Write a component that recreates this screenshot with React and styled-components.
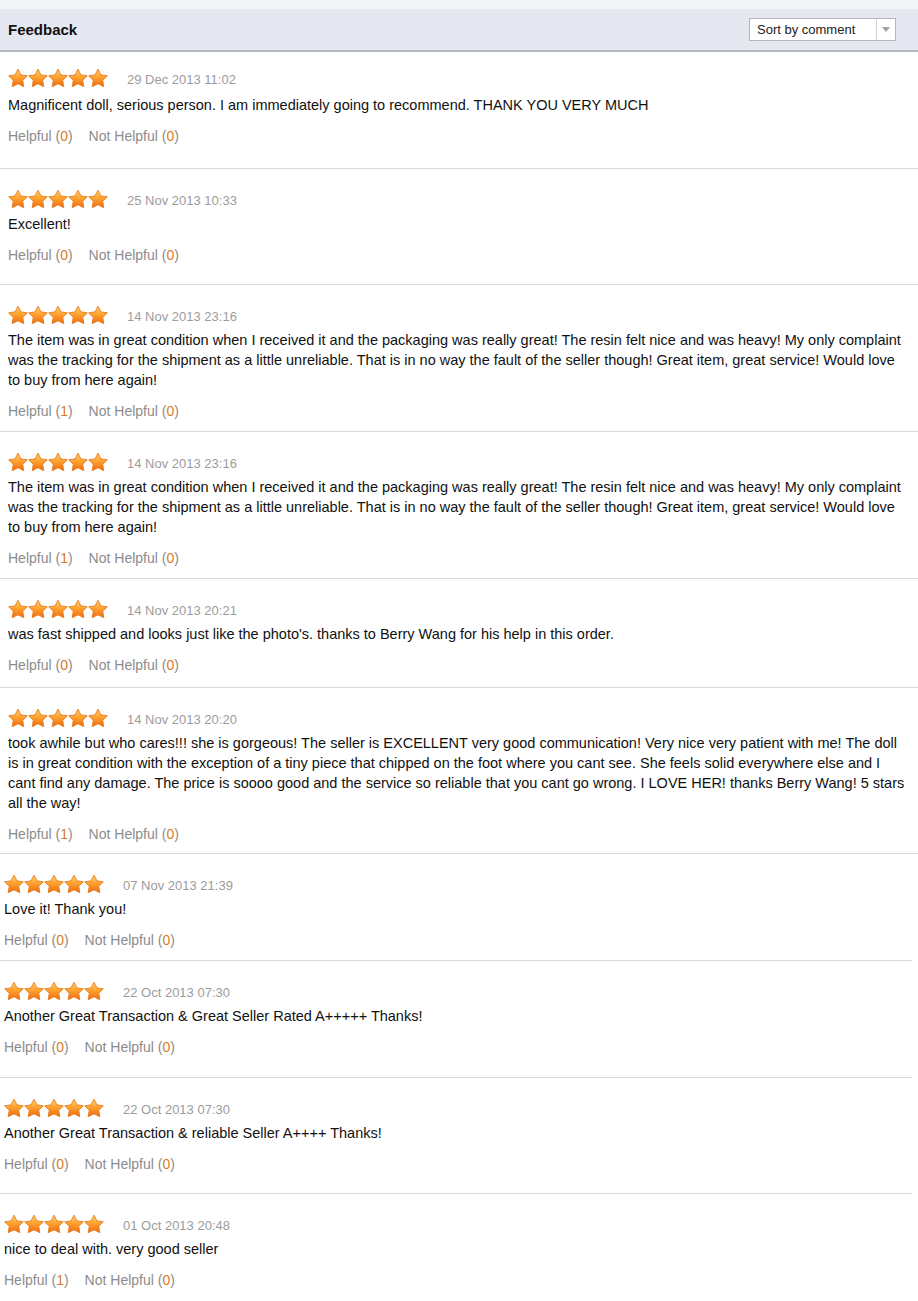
import React from "react";
import styled, { createGlobalStyle } from "styled-components";

const GlobalStyle = createGlobalStyle`
  html, body { margin: 0; padding: 0; background: #ffffff; }
  body { font-family: "Liberation Sans", Arial, sans-serif; color: #111; }
  * { box-sizing: border-box; }
`;

const Page = styled.div`
  width: 918px;
  background: #fff;
`;

const Header = styled.header`
  display: flex;
  align-items: center;
  justify-content: space-between;
  height: 52px;
  padding: 0 22px 0 8px;
  border-top: 9px solid #f3f4f7;
  border-bottom: 2px solid #b6b9c1;
  background: #e5e8f0;
`;

const Title = styled.h2`
  margin: 0;
  font-size: 15px;
  font-weight: bold;
  color: #111;
  line-height: 20px;
`;

const SortSelect = styled.div`
  display: flex;
  align-items: stretch;
  width: 147px;
  height: 23px;
  background: #fff;
  border: 1px solid #b7b7b7;
  cursor: pointer;
`;

const SortLabel = styled.span`
  flex: 1;
  padding-left: 7px;
  font-size: 13px;
  line-height: 21px;
  color: #222;
`;

const ArrowBox = styled.span`
  display: flex;
  align-items: center;
  justify-content: center;
  width: 19px;
  border-left: 1px solid #d2d2d2;
  &::after {
    content: "";
    border-left: 4px solid transparent;
    border-right: 4px solid transparent;
    border-top: 5px solid #a3a3a3;
  }
`;

const List = styled.ul`
  list-style: none;
  margin: 0 ${(p) => p.$trim}px 0 0;
  padding: 0;
`;

const StarRow = styled.div`
  display: flex;
  align-items: center;
  height: 20px;
`;

const Stars = styled.div`
  display: flex;
  margin-top: 3px;
`;

const Date = styled.span`
  margin-left: 19px;
  padding-top: 6px;
  font-size: 13px;
  color: #9c9c9c;
`;

const Comment = styled.p`
  margin: 7px 0 11px;
  font-size: 14.5px;
  line-height: 20px;
  color: #111;
`;

const Item = styled.li`
  padding: 18px 8px ${(p) => p.$pb}px ${(p) => p.$indent}px;
  border-bottom: ${(p) => (p.$last ? "none" : "1px solid #dadada")};
  &:first-child {
    padding-top: ${(p) => p.$pt}px;
  }
  &:first-child ${Comment} {
    margin-top: ${(p) => p.$firstGap}px;
  }
`;

const Votes = styled.div`
  display: flex;
  gap: 16px;
  font-size: 14px;
  line-height: 20px;
  color: #8c8c8c;
`;

const Vote = styled.span`
  cursor: pointer;
`;

const Count = styled.span`
  color: #dc7a24;
`;

function Star() {
  return (
    <svg width="20" height="20" viewBox="0 0 20 20">
      <defs>
        <linearGradient id="starGrad" x1="0" y1="0" x2="0" y2="1">
          <stop offset="0" stopColor="#ffd36e" />
          <stop offset="0.45" stopColor="#ffa330" />
          <stop offset="1" stopColor="#ef6a10" />
        </linearGradient>
      </defs>
      <polygon
        points="10,1.2 12.94,6.9 19.3,7.8 14.76,12.35 15.8,18.7 10,15.8 4.2,18.7 5.24,12.35 0.7,7.8 7.06,6.9"
        fill="url(#starGrad)"
        stroke="#e47a1c"
        strokeWidth="0.9"
        strokeLinejoin="round"
      />
    </svg>
  );
}

const longText =
  "The item was in great condition when I received it and the packaging was really great! The resin felt nice and was heavy! My only complaint was the tracking for the shipment as a little unreliable. That is in no way the fault of the seller though! Great item, great service! Would love to buy from here again!";

const first = [
  {
    date: "29 Dec 2013 11:02",
    text: "Magnificent doll, serious person. I am immediately going to recommend. THANK YOU VERY MUCH",
    h: 0,
    n: 0,
    pb: 22,
  },
  { date: "25 Nov 2013 10:33", text: "Excellent!", h: 0, n: 0, pb: 19 },
  { date: "14 Nov 2013 23:16", text: longText, h: 1, n: 0, pb: 10 },
  { date: "14 Nov 2013 23:16", text: longText, h: 1, n: 0, pb: 10 },
  {
    date: "14 Nov 2013 20:21",
    text: "was fast shipped and looks just like the photo's. thanks to Berry Wang for his help in this order.",
    h: 0,
    n: 0,
    pb: 12,
  },
  {
    date: "14 Nov 2013 20:20",
    text: "took awhile but who cares!!! she is gorgeous! The seller is EXCELLENT very good communication! Very nice very patient with me! The doll is in great condition with the exception of a tiny piece that chipped on the foot where you cant see. She feels solid everywhere else and I cant find any damage. The price is soooo good and the service so reliable that you cant go wrong. I LOVE HER! thanks Berry Wang! 5 stars all the way!",
    h: 1,
    n: 0,
    pb: 9,
  },
];

const second = [
  { date: "07 Nov 2013 21:39", text: "Love it! Thank you!", h: 0, n: 0, pb: 10 },
  {
    date: "22 Oct 2013 07:30",
    text: "Another Great Transaction & Great Seller Rated A+++++ Thanks!",
    h: 0,
    n: 0,
    pb: 20,
  },
  {
    date: "22 Oct 2013 07:30",
    text: "Another Great Transaction & reliable Seller A++++ Thanks!",
    h: 0,
    n: 0,
    pb: 19,
  },
  { date: "01 Oct 2013 20:48", text: "nice to deal with. very good seller", h: 1, n: 0, pb: 12 },
];

function Review({ r, indent, last, pt, firstGap }) {
  return (
    <Item $pb={r.pb} $indent={indent} $last={last} $pt={pt} $firstGap={firstGap}>
      <StarRow>
        <Stars>
          {[0, 1, 2, 3, 4].map((i) => (
            <Star key={i} />
          ))}
        </Stars>
        <Date>{r.date}</Date>
      </StarRow>
      <Comment>{r.text}</Comment>
      <Votes>
        <Vote>
          Helpful (<Count>{r.h}</Count>)
        </Vote>
        <Vote>
          Not Helpful (<Count>{r.n}</Count>)
        </Vote>
      </Votes>
    </Item>
  );
}

export default function App() {
  return (
    <Page>
      <GlobalStyle />
      <Header>
        <Title>Feedback</Title>
        <SortSelect>
          <SortLabel>Sort by comment</SortLabel>
          <ArrowBox />
        </SortSelect>
      </Header>
      <List $trim={0}>
        {first.map((r, i) => (
          <Review key={i} r={r} indent={8} pt={14} firstGap={9} last={false} />
        ))}
      </List>
      <List $trim={6}>
        {second.map((r, i) => (
          <Review key={i} r={r} indent={4} pt={18} firstGap={7} last={i === second.length - 1} />
        ))}
      </List>
    </Page>
  );
}
